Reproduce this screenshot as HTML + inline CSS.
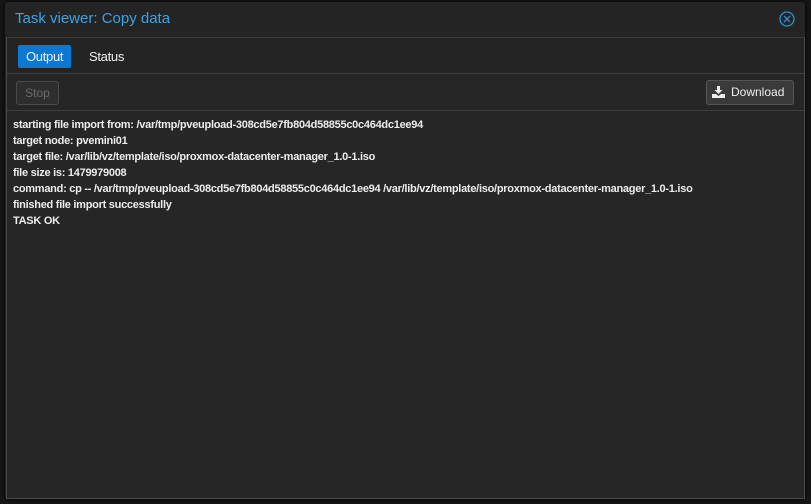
<!DOCTYPE html>
<html><head><style>
body{margin:0;width:811px;height:504px;background:#161616;font-family:"Liberation Sans",Arial,sans-serif;position:relative;overflow:hidden}
.win{position:absolute;left:5px;top:2px;width:800px;height:497px;background:#242424;border-radius:3px;box-shadow:0 0 4px #000}
.title{position:absolute;left:10px;top:8px;color:#3da2e8;font-size:15px}
.close{position:absolute;left:774px;top:9px}
.panel{position:absolute;left:1px;top:35px;width:797px;height:460px;border:1px solid #4a4a4a;border-top:1px solid #3a3a3a;background:#262626}
.tabs{position:absolute;left:0;top:0;width:797px;height:35px;border-bottom:1px solid #3e3e3e;background:#242424}
.tab{position:absolute;top:7px;height:23px;line-height:23px;font-size:13px;color:#f0f0f0;padding:0 8px;border-radius:2px;letter-spacing:-0.3px}
.tb{position:absolute;left:0;top:36px;width:797px;height:36px;border-bottom:1px solid #3e3e3e;background:#262626}
.btn{position:absolute;height:22px;border:1px solid #4a4a4a;border-radius:3px;background:#2e2e2e;font-size:12px;line-height:22px}
.log{position:absolute;left:6px;top:79px;font-size:11px;line-height:16px;color:#ececec;white-space:pre;font-weight:bold;letter-spacing:-0.27px}
</style></head><body>
<div class="win">
<div class="title">Task viewer: Copy data</div>
<svg class="close" width="16" height="16" viewBox="0 0 16 16"><circle cx="8" cy="8" r="7" fill="none" stroke="#2f8fcf" stroke-width="1.3"/><path d="M5 5L11 11M11 5L5 11" stroke="#2f8fcf" stroke-width="1.3"/></svg>
<div class="panel">
<div class="tabs">
<div class="tab" style="left:11px;background:#0b78d4;width:37px;text-align:center">Output</div>
<div class="tab" style="left:74px">Status</div>
</div>
<div class="tb">
<div class="btn" style="left:9px;top:7px;width:41px;text-align:center;color:#6a6a6a">Stop</div>
<div class="btn" style="left:699px;top:6px;width:86px;background:#3a3a3a;border-color:#555;color:#eee;height:23px">
<svg style="position:absolute;left:5px;top:5px" width="13" height="12" viewBox="0 0 13 12"><path d="M5 0h3v4h2.5L6.5 8 2.5 4H5z" fill="#eee"/><path d="M0 8h4l2.5 2 2.5-2h4v4H0z" fill="#eee"/></svg>
<span style="position:absolute;left:24px">Download</span></div>
</div>
<div class="log">starting file import from: /var/tmp/pveupload-308cd5e7fb804d58855c0c464dc1ee94
target node: pvemini01
target file: /var/lib/vz/template/iso/proxmox-datacenter-manager_1.0-1.iso
file size is: 1479979008
command: cp -- /var/tmp/pveupload-308cd5e7fb804d58855c0c464dc1ee94 /var/lib/vz/template/iso/proxmox-datacenter-manager_1.0-1.iso
finished file import successfully
TASK OK</div>
</div>
</div>
</body></html>
